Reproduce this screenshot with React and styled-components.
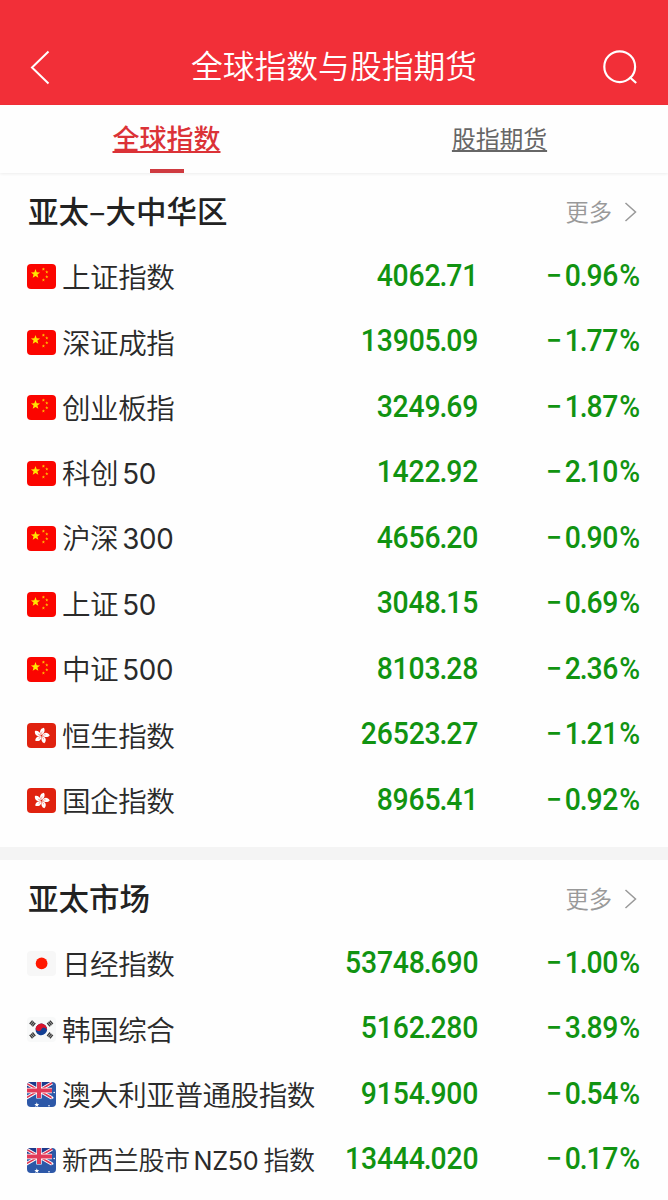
import React, { useState } from 'react';
import styled, { createGlobalStyle } from 'styled-components';

// --- Styled Components ---
const GlobalStyle = createGlobalStyle`
    * {
        box-sizing: border-box;
    }

    body {
        margin: 0;
        background-color: #fff;
        font-family: 'Noto Sans CJK SC', sans-serif;
        color: #2a2a2a;
    }
`;

const Page = styled.div`
    width: 668px;
    height: 1200px;
    overflow: hidden;
    background-color: #fefefe;
`;

const Header = styled.header`
    display: flex;
    align-items: center;
    justify-content: space-between;
    height: 105px;
    padding: 29px 30px 0;
    background-color: #f22f38;
    color: #fff;
`;

const HeaderTitle = styled.h1`
    margin: 0;
    padding-bottom: 6px;
    font-size: 31.8px;
    font-weight: 350;
    line-height: 40px;
`;

const IconButton = styled.button`
    display: flex;
    width: 35px;
    padding: 0;
    border: none;
    background: none;
    color: inherit;
    cursor: pointer;
`;

const TabBar = styled.nav`
    display: flex;
    height: 68px;
    padding-right: 2px;
    box-shadow: 0 1px 3px rgba(0, 0, 0, 0.07);
`;

const Tab = styled.button`
    flex: 1;
    display: flex;
    flex-direction: column;
    align-items: center;
    justify-content: space-between;
    padding: 13px 0 0;
    border: none;
    background: none;
    color: ${({ $active }) => ($active ? '#db3237' : '#666')};
    font-family: inherit;
    font-size: ${({ $active }) => ($active ? '27px' : '23.8px')};
    font-weight: ${({ $active }) => ($active ? 500 : 400)};
    line-height: 40px;
    cursor: pointer;
`;

const TabText = styled.span`
    text-decoration: underline;
    text-decoration-thickness: 1.5px;
    text-underline-offset: 2px;
    text-decoration-skip-ink: none;
`;

const TabMarker = styled.span`
    width: 34px;
    height: 4px;
    background-color: ${({ $active }) => ($active ? '#cf3a40' : 'transparent')};
`;

const Section = styled.section`
    padding: 0 28px 13.5px 27px;
    border-bottom: 13px solid #f4f4f4;
`;

const SectionHeader = styled.div`
    display: flex;
    align-items: center;
    justify-content: space-between;
    height: 71px;
    padding-top: 6px;
`;

const SectionTitle = styled.h2`
    margin: 0;
    padding: 0 0 3px 1px;
    font-size: 30.5px;
    font-weight: 500;
    line-height: 40px;
    color: #222;
`;

const MoreLink = styled.a`
    display: flex;
    align-items: center;
    gap: 12px;
    padding-right: 3px;
    color: #999;
`;

const MoreText = styled.span`
    padding-bottom: 1px;
    font-size: 23.3px;
    font-weight: 350;
    line-height: 34px;
`;

const Row = styled.div`
    display: grid;
    grid-template-columns: 35px 1fr 150px 163px;
    align-items: center;
    height: 65.5px;
`;

const Flag = styled.svg`
    display: block;
    width: 29px;
    height: 25px;
    border-radius: 4px;
`;

const IndexName = styled.span`
    padding-bottom: 1px;
    font-size: ${({ $compact }) => ($compact ? '26px' : '28.6px')};
    font-weight: 350;
    letter-spacing: -0.5px;
    line-height: 40px;
    white-space: nowrap;
`;

const Latin = styled.span`
    margin: 0 ${({ $inner }) => ($inner ? '5px' : '0')} 0 4px;
    font-family: Inter, sans-serif;
    font-size: 0.97em;
    font-weight: 400;
    letter-spacing: -0.3px;
`;

const Figure = styled.span`
    justify-self: end;
    padding-bottom: 2px;
    font-family: Roboto, sans-serif;
    font-size: 30.5px;
    font-weight: 500;
    letter-spacing: -0.2px;
    line-height: 40px;
    color: #119311;
    white-space: nowrap;
    transform: scaleX(0.93);
    transform-origin: right center;
`;

const ValueFigure = styled(Figure)`
    margin-right: -1px;
`;

const Point = styled.span`
    margin: 0 -1px;
`;

const Minus = styled.span`
    margin-right: 3px;
`;

const Percent = styled.span`
    margin-left: 1px;
`;

// --- Flags ---
const starPoints = (cx, cy, r) =>
    Array.from({ length: 10 }, (_, i) => {
        const radius = i % 2 ? r * 0.42 : r;
        const angle = (Math.PI / 5) * i - Math.PI / 2;
        return `${cx + radius * Math.cos(angle)},${cy + radius * Math.sin(angle)}`;
    }).join(' ');

const ChinaFlag = () => (
    <Flag viewBox="0 0 29 25">
        <rect width="29" height="25" fill="#fb0500" />
        <polygon points={starPoints(8.5, 9.9, 4.8)} fill="#ffe600" />
        {[[16.4, 5.2], [19.8, 8], [19.8, 12.8], [16.4, 16]].map(([x, y]) => (
            <polygon key={y} points={starPoints(x, y, 1.7)} fill="#ffc000" />
        ))}
    </Flag>
);

const HongKongFlag = () => (
    <Flag viewBox="0 0 29 25">
        <rect width="29" height="25" fill="#e0220f" />
        {[12, 84, 156, 228, 300].map(angle => (
            <g key={angle} transform={`translate(14.6 12.6) rotate(${angle})`}>
                <path d="M0-.6C-3.3-2.4-3.2-6.6.7-8.1C2.7-5.8 2.2-3 0-.6Z" fill="#fff" />
                <path d="M0-1.5Q-1-2.8-.2-4.2" fill="none" stroke="#e0220f" strokeWidth=".35" />
            </g>
        ))}
    </Flag>
);

const JapanFlag = () => (
    <Flag viewBox="0 0 29 25">
        <rect width="29" height="25" fill="#f7f7f7" />
        <circle cx="14.6" cy="12.4" r="5.9" fill="#ff1800" />
    </Flag>
);

const KoreaFlag = () => (
    <Flag viewBox="0 0 29 25">
        <rect width="29" height="25" fill="#f8f9f9" />
        {[[5.5, 6.5, -50], [23, 6.5, 50], [5.5, 18.4, 50], [23, 18.4, -50]].map(([x, y, angle]) => (
            <path
                key={`${x}-${y}`}
                transform={`translate(${x} ${y}) rotate(${angle})`}
                d="M-2.2-1.8h4.4M-2.2 0h4.4M-2.2 1.8h4.4"
                stroke="#3c3c3c"
                strokeWidth="1.4"
            />
        ))}
        <g transform="translate(14.3 12.4) rotate(25)">
            <circle r="5.8" fill="#123f94" />
            <path d="M-5.8 0A5.8 5.8 0 0 1 5.8 0A2.9 2.9 0 0 0 0 0A2.9 2.9 0 0 1-5.8 0Z" fill="#d9142c" />
        </g>
    </Flag>
);

const SouthernFlag = () => (
    <Flag viewBox="0 0 29 25">
        <rect width="29" height="25" fill="#2d58a8" />
        <path d="M0 0H25V8H0Z" fill="#1f3a8c" />
        <path d="M-1 1L25 16M25 1L-1 16" stroke="#fff" strokeWidth="3.4" />
        <path d="M-1 1L25 16M25 1L-1 16" stroke="#e03350" strokeWidth="1.6" />
        <path d="M12 0V16.5M0 8.5H25" stroke="#fff" strokeWidth="5.4" />
        <path d="M12 0V16M0 8.5H25" stroke="#e23a58" strokeWidth="4" />
        <polygon points={starPoints(9.8, 22.8, 2.6)} fill="#fff" />
        <circle cx="25.5" cy="15.7" r="1" fill="#fff" />
        <circle cx="22" cy="23.7" r=".8" fill="#fff" />
        <circle cx="27.2" cy="10.5" r=".8" fill="#fff" />
    </Flag>
);

const flags = {
    cn: ChinaFlag,
    hk: HongKongFlag,
    jp: JapanFlag,
    kr: KoreaFlag,
    au: SouthernFlag,
    nz: SouthernFlag
};

// --- Data ---
const tabs = ['全球指数', '股指期货'];

const sections = [
    {
        title: '亚太–大中华区',
        rows: [
            { flag: 'cn', name: '上证指数', value: '4062.71', change: '0.96' },
            { flag: 'cn', name: '深证成指', value: '13905.09', change: '1.77' },
            { flag: 'cn', name: '创业板指', value: '3249.69', change: '1.87' },
            { flag: 'cn', name: '科创50', value: '1422.92', change: '2.10' },
            { flag: 'cn', name: '沪深300', value: '4656.20', change: '0.90' },
            { flag: 'cn', name: '上证50', value: '3048.15', change: '0.69' },
            { flag: 'cn', name: '中证500', value: '8103.28', change: '2.36' },
            { flag: 'hk', name: '恒生指数', value: '26523.27', change: '1.21' },
            { flag: 'hk', name: '国企指数', value: '8965.41', change: '0.92' }
        ]
    },
    {
        title: '亚太市场',
        rows: [
            { flag: 'jp', name: '日经指数', value: '53748.690', change: '1.00' },
            { flag: 'kr', name: '韩国综合', value: '5162.280', change: '3.89' },
            { flag: 'au', name: '澳大利亚普通股指数', value: '9154.900', change: '0.54' },
            { flag: 'nz', name: '新西兰股市NZ50指数', value: '13444.020', change: '0.17', compact: true }
        ]
    }
];

const Decimal = ({ text }) => {
    const [whole, fraction] = text.split('.');
    return <>{whole}<Point>.</Point>{fraction}</>;
};

const IndexRow = ({ row }) => {
    const FlagIcon = flags[row.flag];
    const parts = row.name.split(/([A-Z0-9]+)/).filter(Boolean);

    return (
        <Row>
            <FlagIcon />
            <IndexName $compact={row.compact}>
                {parts.map((part, i) =>
                    /^[A-Z0-9]/.test(part)
                        ? <Latin key={part} $inner={i < parts.length - 1}>{part}</Latin>
                        : part
                )}
            </IndexName>
            <ValueFigure><Decimal text={row.value} /></ValueFigure>
            <Figure><Minus>−</Minus><Decimal text={row.change} /><Percent>%</Percent></Figure>
        </Row>
    );
};

const App = () => {
    const [activeTab, setActiveTab] = useState(tabs[0]);

    return (
        <Page>
            <GlobalStyle />
            <Header>
                <IconButton type="button">
                    <svg width="20" height="35" viewBox="0 0 20 35" fill="none" stroke="currentColor" strokeWidth="2">
                        <path d="M18.5 1.5L2 17.5L18.5 33.5" />
                    </svg>
                </IconButton>
                <HeaderTitle>全球指数与股指期货</HeaderTitle>
                <IconButton type="button">
                    <svg width="35" height="35" viewBox="0 0 35 35" fill="none" stroke="currentColor" strokeWidth="2.2">
                        <circle cx="16.7" cy="16.7" r="15.4" />
                        <path d="M26.5 27L33.2 33" />
                    </svg>
                </IconButton>
            </Header>
            <TabBar>
                {tabs.map(tab => (
                    <Tab key={tab} type="button" $active={tab === activeTab} onClick={() => setActiveTab(tab)}>
                        <TabText>{tab}</TabText>
                        <TabMarker $active={tab === activeTab} />
                    </Tab>
                ))}
            </TabBar>
            {sections.map(section => (
                <Section key={section.title}>
                    <SectionHeader>
                        <SectionTitle>{section.title}</SectionTitle>
                        <MoreLink>
                            <MoreText>更多</MoreText>
                            <svg width="13" height="20" viewBox="0 0 13 20" fill="none" stroke="currentColor" strokeWidth="1.5">
                                <path d="M1.5 1L11.5 10L1.5 19" />
                            </svg>
                        </MoreLink>
                    </SectionHeader>
                    {section.rows.map(row => (
                        <IndexRow key={row.name} row={row} />
                    ))}
                </Section>
            ))}
        </Page>
    );
};

export default App;
